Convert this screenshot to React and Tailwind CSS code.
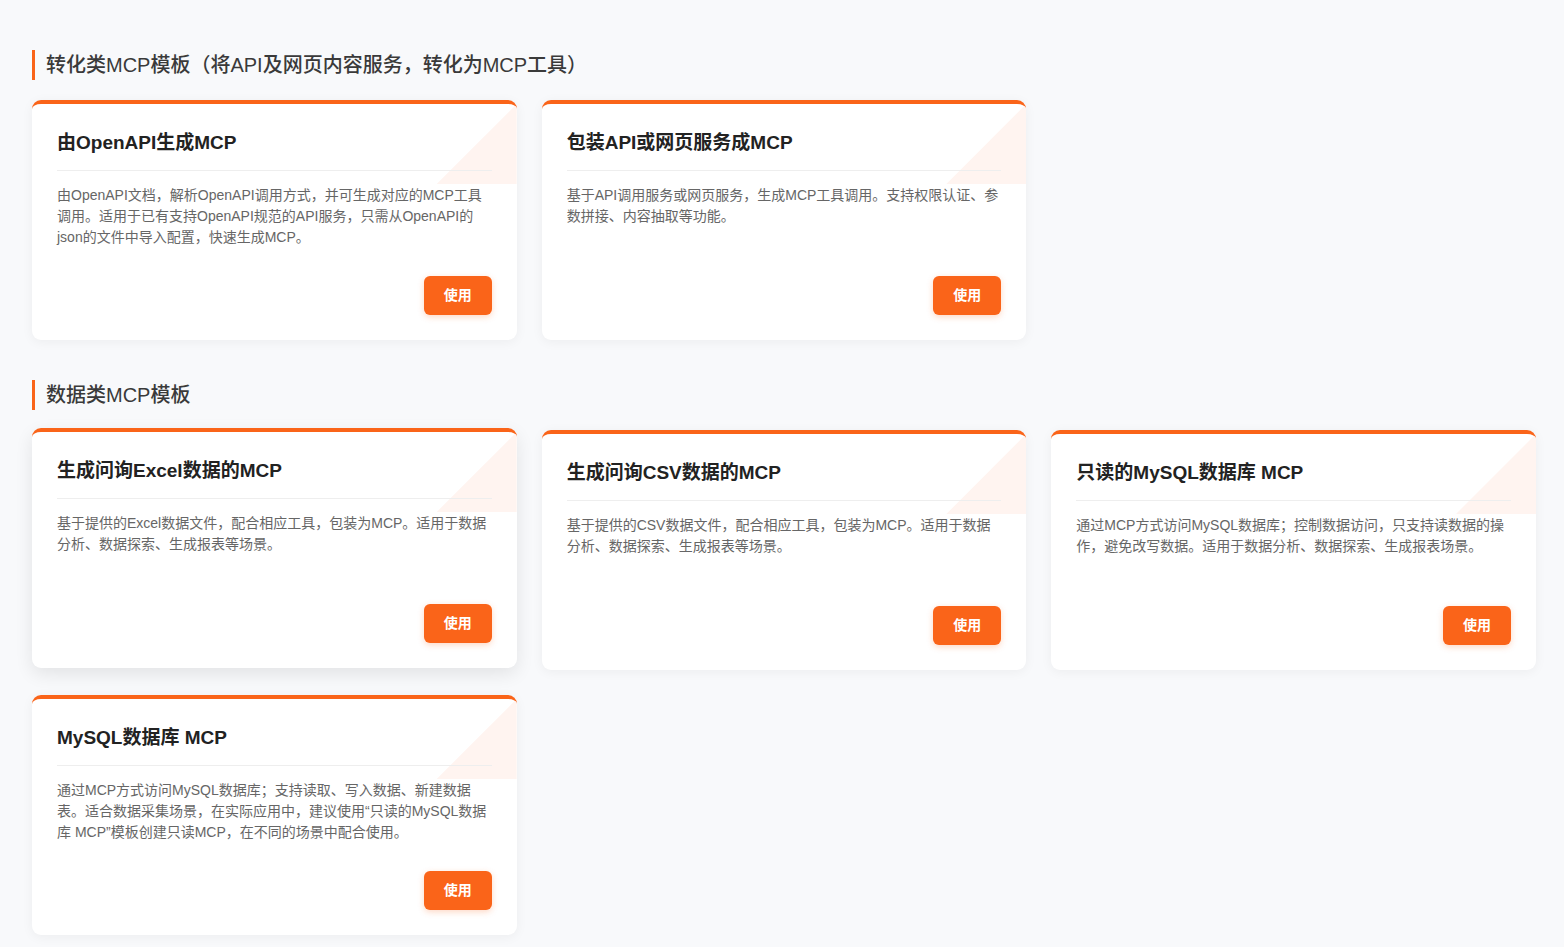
import React from "react";

const sections = [
  {
    title: "转化类MCP模板（将API及网页内容服务，转化为MCP工具）",
    cards: [
      {
        title: "由OpenAPI生成MCP",
        desc: "由OpenAPI文档，解析OpenAPI调用方式，并可生成对应的MCP工具调用。适用于已有支持OpenAPI规范的API服务，只需从OpenAPI的json的文件中导入配置，快速生成MCP。",
      },
      {
        title: "包装API或网页服务成MCP",
        desc: "基于API调用服务或网页服务，生成MCP工具调用。支持权限认证、参数拼接、内容抽取等功能。",
      },
    ],
  },
  {
    title: "数据类MCP模板",
    cards: [
      {
        title: "生成问询Excel数据的MCP",
        desc: "基于提供的Excel数据文件，配合相应工具，包装为MCP。适用于数据分析、数据探索、生成报表等场景。",
        hover: true,
      },
      {
        title: "生成问询CSV数据的MCP",
        desc: "基于提供的CSV数据文件，配合相应工具，包装为MCP。适用于数据分析、数据探索、生成报表等场景。",
      },
      {
        title: "只读的MySQL数据库 MCP",
        desc: "通过MCP方式访问MySQL数据库；控制数据访问，只支持读数据的操作，避免改写数据。适用于数据分析、数据探索、生成报表场景。",
      },
      {
        title: "MySQL数据库 MCP",
        desc: "通过MCP方式访问MySQL数据库；支持读取、写入数据、新建数据表。适合数据采集场景，在实际应用中，建议使用“只读的MySQL数据库 MCP”模板创建只读MCP，在不同的场景中配合使用。",
      },
    ],
  },
];

function Card({ card }) {
  return (
    <div
      className={
        "relative flex h-[240px] flex-col overflow-hidden rounded-[9px] border-t-[4px] border-[#fa6419] bg-white px-[25px] pb-[25px] pt-[25px] " +
        (card.hover
          ? "-translate-y-[2px] shadow-[0_6px_18px_rgba(0,0,0,0.09)]"
          : "shadow-[0_2px_12px_rgba(0,0,0,0.05)]")
      }
    >
      <div className="absolute right-0 top-0 h-[80px] w-[80px] bg-[#fff4f0] [clip-path:polygon(100%_0,100%_100%,0_100%)]" />
      <div className="relative flex flex-1 flex-col">
        <div className="border-b border-[#eeeeee] pb-[13px] text-[19px] font-bold leading-[28px] text-[#222222]">
          {card.title}
        </div>
        <div className="mt-[14px] text-[14px] leading-[21px] text-[#666666]">
          {card.desc}
        </div>
        <div className="mt-auto flex justify-end">
          <button className="h-[39px] w-[68px] rounded-[6px] bg-[#fa6419] text-[14px] font-bold text-white shadow-[0_2px_6px_rgba(250,100,25,0.25)]">
            使用
          </button>
        </div>
      </div>
    </div>
  );
}

export default function App() {
  return (
    <div
      className="min-h-screen bg-[#f8f9fb] pb-[13px] pl-[32px] pr-[28px] pt-[50px]"
      style={{ fontFamily: '"Liberation Sans", "Noto Sans CJK SC", sans-serif' }}
    >
      {sections.map((s, i) => (
        <div key={i} className={i === 0 ? "mb-[40px]" : ""}>
          <div className="mb-[20px] border-l-[3px] border-[#fa6419] pl-[11px] text-[20px] font-medium leading-[30px] text-[#3a3a3a]">
            {s.title}
          </div>
          <div className="grid grid-cols-3 gap-[25px]">
            {s.cards.map((c, j) => (
              <Card key={j} card={c} />
            ))}
          </div>
        </div>
      ))}
    </div>
  );
}
